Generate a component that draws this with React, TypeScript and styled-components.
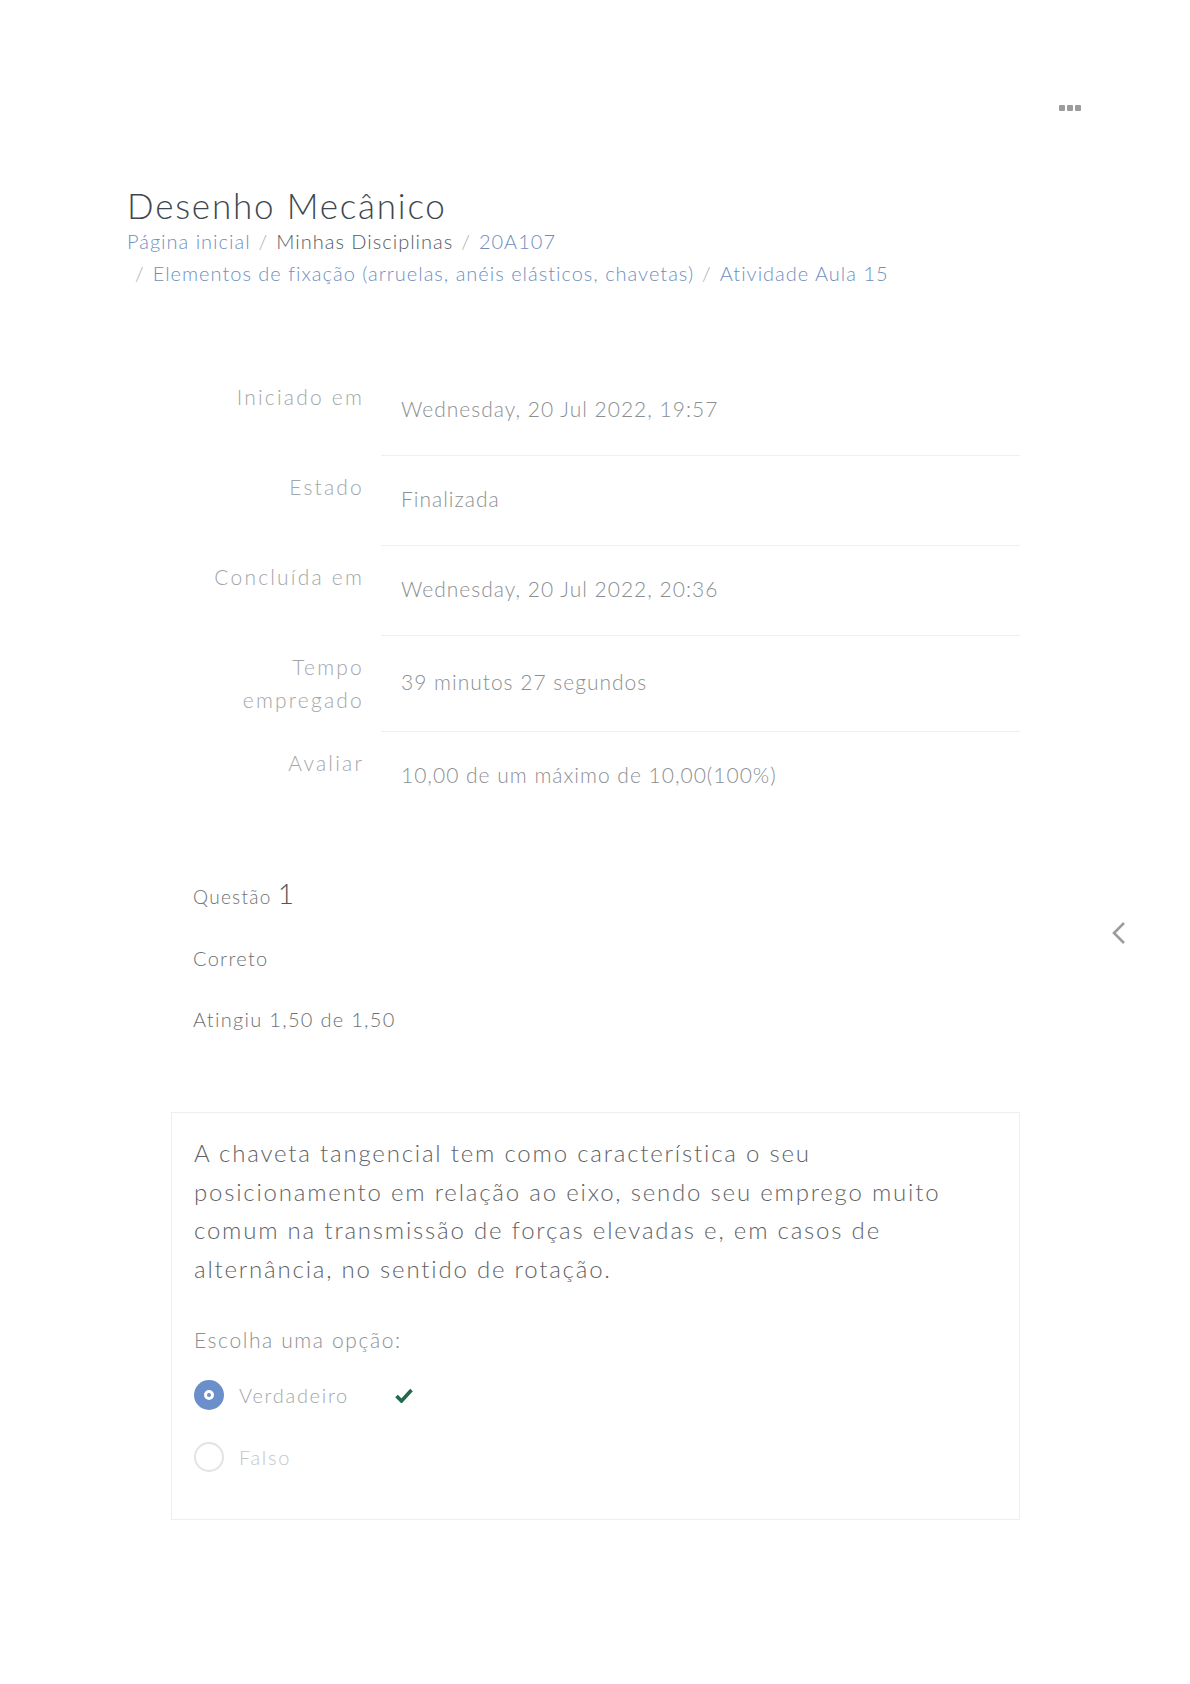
import styled, { createGlobalStyle } from 'styled-components';

const GlobalStyle = createGlobalStyle`
  body {
    margin: 0;
    background: #fff;
    font-family: Lato, "Open Sans", "Liberation Sans", sans-serif;
    font-weight: 300;
  }
`;

const Page = styled.div`
  position: relative;
  width: 1190px;
  min-height: 1684px;
`;

const TopBar = styled.div`
  display: flex;
  justify-content: flex-end;
  padding: 105px 109px 0 0;
`;

const MenuButton = styled.button`
  display: flex;
  gap: 2px;
  border: 0;
  background: none;
  padding: 0;
`;

const Dot = styled.span`
  width: 6px;
  height: 6px;
  border-radius: 1px;
  background: #9c9c9c;
`;

const Main = styled.main`
  margin-left: 127px;
  width: 893px;
`;

const Title = styled.h1`
  margin: 74px 0 0;
  font-size: 35px;
  line-height: 40px;
  font-weight: 300;
  letter-spacing: 1.8px;
  color: #3e4750;
`;

const Breadcrumb = styled.ol`
  display: flex;
  flex-wrap: wrap;
  list-style: none;
  margin: 0;
  padding: 0;
  font-size: 20px;
  line-height: 32px;
  letter-spacing: 1px;
`;

const Crumb = styled.li<{ $link?: boolean }>`
  color: ${(p) => (p.$link ? '#6f8fbf' : '#555b61')};

  &:not(:first-child) {
    padding-left: 8px;
  }

  &:not(:first-child)::before {
    content: '/';
    color: #a9adb1;
    padding-right: 8px;
  }
`;

const Summary = styled.dl`
  display: grid;
  grid-template-columns: 237px 639px;
  column-gap: 17px;
  margin: 77px 0 0;
`;

const Label = styled.dt`
  text-align: right;
  padding: 14px 0 16px;
  font-size: 21px;
  line-height: 33px;
  letter-spacing: 2.2px;
  color: #a3a6a9;
`;

const Value = styled.dd<{ $last?: boolean }>`
  display: flex;
  align-items: center;
  margin: 0;
  padding: 27px 20px 30px;
  font-size: 21px;
  line-height: 32px;
  letter-spacing: 1px;
  color: #8c8f92;
  border-bottom: ${(p) => (p.$last ? '0' : '1px solid #eef0f1')};
`;

const Info = styled.div`
  display: flex;
  flex-direction: column;
  gap: 29px;
  margin: 56px 0 0 66px;
`;

const InfoLine = styled.div<{ $size?: number }>`
  font-size: ${(p) => p.$size ?? 20}px;
  line-height: 32px;
  letter-spacing: 1.3px;
  color: #6d7175;
`;

const QNumber = styled.span`
  font-size: 28px;
  font-weight: 300;
  color: #555;
  margin-left: 6px;
`;

const Card = styled.section`
  margin: 77px 0 0 44px;
  width: 849px;
  box-sizing: border-box;
  border: 1px solid #eceeef;
  padding: 21px 22px 31px;
`;

const Prompt = styled.p`
  margin: 0;
  max-width: 775px;
  font-size: 24px;
  line-height: 38.5px;
  letter-spacing: 1.8px;
  color: #5f6367;
`;

const Choose = styled.div`
  margin-top: 36px;
  font-size: 21px;
  line-height: 32px;
  letter-spacing: 1.6px;
  color: #8d9093;
`;

const Options = styled.div`
  margin-top: 8px;
`;

const Option = styled.label<{ $muted?: boolean }>`
  display: flex;
  align-items: center;
  height: 62px;
  font-size: 20px;
  letter-spacing: 1.7px;
  color: ${(p) => (p.$muted ? '#c3c6c8' : '#a3a6a9')};
`;

const Radio = styled.span<{ $checked?: boolean }>`
  width: 30px;
  height: 30px;
  box-sizing: border-box;
  border-radius: 50%;
  display: flex;
  align-items: center;
  justify-content: center;
  margin-right: 15px;
  background: ${(p) => (p.$checked ? '#6b8fcb' : '#fff')};
  border: ${(p) => (p.$checked ? '0' : '2px solid #e2e3e4')};

  &::after {
    content: '';
    display: ${(p) => (p.$checked ? 'block' : 'none')};
    width: 4px;
    height: 4px;
    border-radius: 50%;
    background: #6b8fcb;
    border: 3px solid #fff;
  }
`;

const Check = styled.span`
  display: flex;
  margin-left: 46px;
  color: #1f6b4b;
`;

const DrawerToggle = styled.button`
  position: absolute;
  top: 920px;
  left: 1108px;
  width: 24px;
  height: 26px;
  border: 0;
  background: none;
  padding: 0;
  color: #9c9c9c;
`;

const rows: { label: string[]; value: string }[] = [
  { label: ['Iniciado em'], value: 'Wednesday, 20 Jul 2022, 19:57' },
  { label: ['Estado'], value: 'Finalizada' },
  { label: ['Concluída em'], value: 'Wednesday, 20 Jul 2022, 20:36' },
  { label: ['Tempo', 'empregado'], value: '39 minutos 27 segundos' },
  { label: ['Avaliar'], value: '10,00 de um máximo de 10,00(100%)' },
];

export default function App() {
  return (
    <Page>
      <GlobalStyle />
      <TopBar>
        <MenuButton aria-label="Menu">
          <Dot />
          <Dot />
          <Dot />
        </MenuButton>
      </TopBar>
      <Main>
        <Title>Desenho Mecânico</Title>
        <Breadcrumb>
          <Crumb $link>Página inicial</Crumb>
          <Crumb>Minhas Disciplinas</Crumb>
          <Crumb $link>20A107</Crumb>
          <Crumb $link>Elementos de fixação (arruelas, anéis elásticos, chavetas)</Crumb>
          <Crumb $link>Atividade Aula 15</Crumb>
        </Breadcrumb>

        <Summary>
          {rows.map((r, i) => (
            <>
              <Label key={`l${i}`}>
                {r.label.map((l) => (
                  <div key={l}>{l}</div>
                ))}
              </Label>
              <Value key={`v${i}`} $last={i === rows.length - 1}>
                {r.value}
              </Value>
            </>
          ))}
        </Summary>

        <Info>
          <InfoLine $size={19}>
            Questão<QNumber>1</QNumber>
          </InfoLine>
          <InfoLine>Correto</InfoLine>
          <InfoLine>Atingiu 1,50 de 1,50</InfoLine>
        </Info>

        <Card>
          <Prompt>
            A chaveta tangencial tem como característica o seu posicionamento em relação ao eixo,
            sendo seu emprego muito comum na transmissão de forças elevadas e, em casos de
            alternância, no sentido de rotação.
          </Prompt>
          <Choose>Escolha uma opção:</Choose>
          <Options>
            <Option>
              <Radio $checked />
              Verdadeiro
              <Check>
                <svg width="18" height="15" viewBox="0 0 18 15">
                  <path d="M1.5 8 L6.5 13 L16.5 2" fill="none" stroke="currentColor" strokeWidth="3.6" strokeLinejoin="miter" />
                </svg>
              </Check>
            </Option>
            <Option $muted>
              <Radio />
              Falso
            </Option>
          </Options>
        </Card>
      </Main>

      <DrawerToggle aria-label="Abrir bloco">
        <svg width="24" height="26" viewBox="0 0 24 26">
          <polyline points="16,3 6,13 16,23" fill="none" stroke="currentColor" strokeWidth="2.6" />
        </svg>
      </DrawerToggle>
    </Page>
  );
}
